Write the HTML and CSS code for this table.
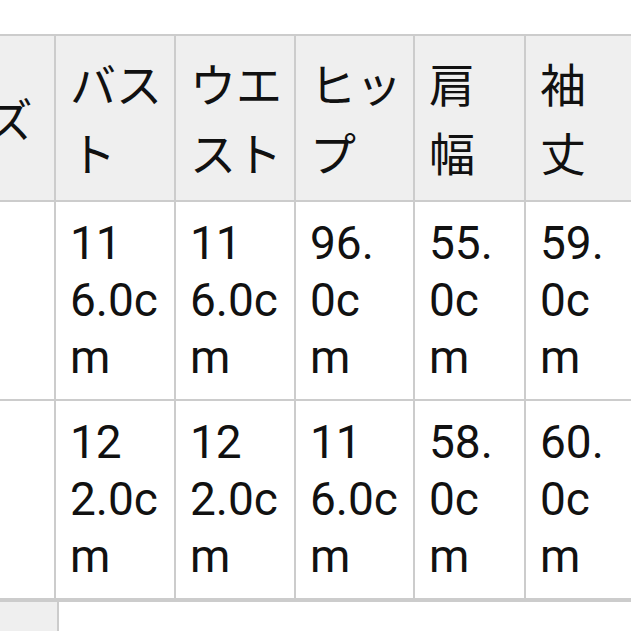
FILE: index.html
```html
<!DOCTYPE html>
<html lang="ja">
<head>
<meta charset="utf-8">
<title>サイズ表</title>
<link rel="stylesheet" href="styles.css">
</head>
<body>
<div class="sheet">
  <div class="size-grid">
    <div class="cell head"><span class="val">サイズ</span></div>
    <div class="cell head"><span class="val">バス<br>ト</span></div>
    <div class="cell head"><span class="val">ウエ<br>スト</span></div>
    <div class="cell head"><span class="val">ヒッ<br>プ</span></div>
    <div class="cell head"><span class="val">肩<br>幅</span></div>
    <div class="cell head"><span class="val">袖<br>丈</span></div>

    <div class="cell"></div>
    <div class="cell"><span class="val">11<br>6.0c<br>m</span></div>
    <div class="cell"><span class="val">11<br>6.0c<br>m</span></div>
    <div class="cell"><span class="val">96.<br>0c<br>m</span></div>
    <div class="cell"><span class="val">55.<br>0c<br>m</span></div>
    <div class="cell"><span class="val">59.<br>0c<br>m</span></div>

    <div class="cell"></div>
    <div class="cell"><span class="val">12<br>2.0c<br>m</span></div>
    <div class="cell"><span class="val">12<br>2.0c<br>m</span></div>
    <div class="cell"><span class="val">11<br>6.0c<br>m</span></div>
    <div class="cell"><span class="val">58.<br>0c<br>m</span></div>
    <div class="cell"><span class="val">60.<br>0c<br>m</span></div>
  </div>
  <div class="next-grid">
    <div class="cell head blank"></div>
    <div class="cell blank"></div>
  </div>
</div>
</body>
</html>
```

FILE: styles.css
```css
html, body {
  margin: 0;
  padding: 0;
  background: #ffffff;
  overflow: hidden;
}

.sheet {
  padding-top: 34px;
  margin-left: -118px;
  font-family: Roboto, "Noto Sans CJK JP", sans-serif;
  font-size: 46px;
  color: #111111;
}

.size-grid {
  display: grid;
  grid-template-columns: 174px 120px 120px 119px 111px 111px;
  width: max-content;
  border-top: 2px solid #cccccc;
}

.cell {
  box-sizing: border-box;
  display: flex;
  flex-direction: column;
  justify-content: center;
  padding: 13px 14px;
  line-height: 57px;
  border-right: 2px solid #cccccc;
  border-bottom: 2px solid #cccccc;
  background: #ffffff;
  white-space: nowrap;
}

.head {
  background: #efefef;
  line-height: 69px;
  padding: 16px 14px 10px;
}

.next-grid {
  display: grid;
  grid-template-columns: 177px 700px;
  width: max-content;
  border-top: 2px solid #cccccc;
}

.blank {
  height: 60px;
  padding: 0;
}
```
